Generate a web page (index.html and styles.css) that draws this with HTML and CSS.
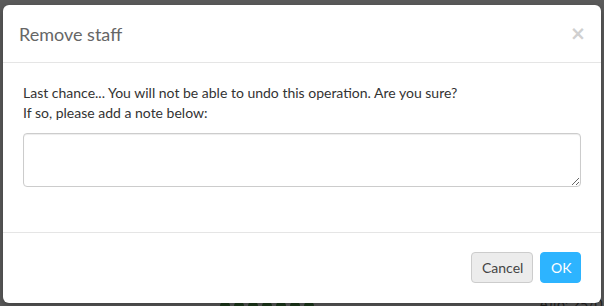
FILE: index.html
```html
<!DOCTYPE html>
<html>
<head>
<meta charset="utf-8">
<link rel="stylesheet" href="styles.css">
</head>
<body>
<div class="backdrop-dots">
  <span></span><span></span><span></span><span></span><span></span><span></span><span></span>
</div>
<div class="backdrop-text">Από: 25/0</div>
<div class="modal">
  <div class="modal-header">
    <h4 class="modal-title">Remove staff</h4>
    <span class="close">&times;</span>
  </div>
  <div class="modal-body">
    <p class="msg">Last chance... You will not be able to undo this operation. Are you sure?<br>If so, please add a note below:</p>
    <textarea class="note"></textarea>
  </div>
  <div class="modal-footer">
    <button class="btn btn-default">Cancel</button>
    <button class="btn btn-primary">OK</button>
  </div>
</div>
</body>
</html>
```
FILE: styles.css
```css
html, body {
  margin: 0;
  height: 100%;
}
body {
  background: #5b5b5b;
  padding: 5px 3px 0 3px;
  box-sizing: border-box;
  font-family: Lato, "Open Sans", sans-serif;
  font-size: 14px;
  color: #333;
  position: relative;
  overflow: hidden;
}
.backdrop-dots {
  position: absolute;
  left: 220px;
  top: 301px;
  display: flex;
  gap: 4px;
}
.backdrop-dots span {
  width: 10px;
  height: 10px;
  border-radius: 50%;
  background: #1d3a1c;
}
.backdrop-text {
  position: absolute;
  left: 539px;
  top: 295px;
  font-size: 14px;
  color: #222;
}
.modal {
  position: relative;
  width: 598px;
  height: 298px;
  background: #fff;
  border-radius: 6px;
  box-shadow: 0 3px 9px rgba(0,0,0,0.3);
  display: flex;
  flex-direction: column;
  box-sizing: border-box;
}
.modal-header {
  height: 58px;
  box-sizing: border-box;
  border-bottom: 1px solid #e5e5e5;
  padding: 0 16px;
  display: flex;
  align-items: center;
  justify-content: space-between;
}
.modal-title {
  margin: 0;
  font-size: 18px;
  font-weight: 400;
  color: #666;
}
.close {
  font-size: 19px;
  font-weight: 700;
  color: #d0d0d0;
  line-height: 1;
  margin-right: -1px;
  font-family: "DejaVu Sans", sans-serif;
}
.modal-body {
  padding: 20px 20px 0 20px;
  height: 170px;
  box-sizing: border-box;
  border-bottom: 1px solid #e5e5e5;
}
.msg {
  margin: 0 0 10px 0;
  line-height: 20px;
}
.note {
  display: block;
  width: 558px;
  height: 54px;
  box-sizing: border-box;
  border: 1px solid #ccc;
  border-radius: 4px;
  margin: 0;
  padding: 6px 12px;
  font-family: inherit;
  font-size: 14px;
  box-shadow: inset 0 1px 1px rgba(0,0,0,0.075);
}
.modal-footer {
  flex: 1;
  display: flex;
  justify-content: flex-end;
  align-items: flex-start;
  gap: 7px;
  padding: 19px 20px 0 20px;
}
.btn {
  height: 31px;
  box-sizing: border-box;
  font-family: inherit;
  font-size: 14px;
  border-radius: 4px;
  padding: 0 10px;
  border: 1px solid transparent;
}
.btn-default {
  background: #ececec;
  border-color: #cccccc;
  color: #444;
  width: 62px;
}
.btn-primary {
  background: #2db4ff;
  border-color: #2db4ff;
  color: #fff;
  width: 41px;
}
```
